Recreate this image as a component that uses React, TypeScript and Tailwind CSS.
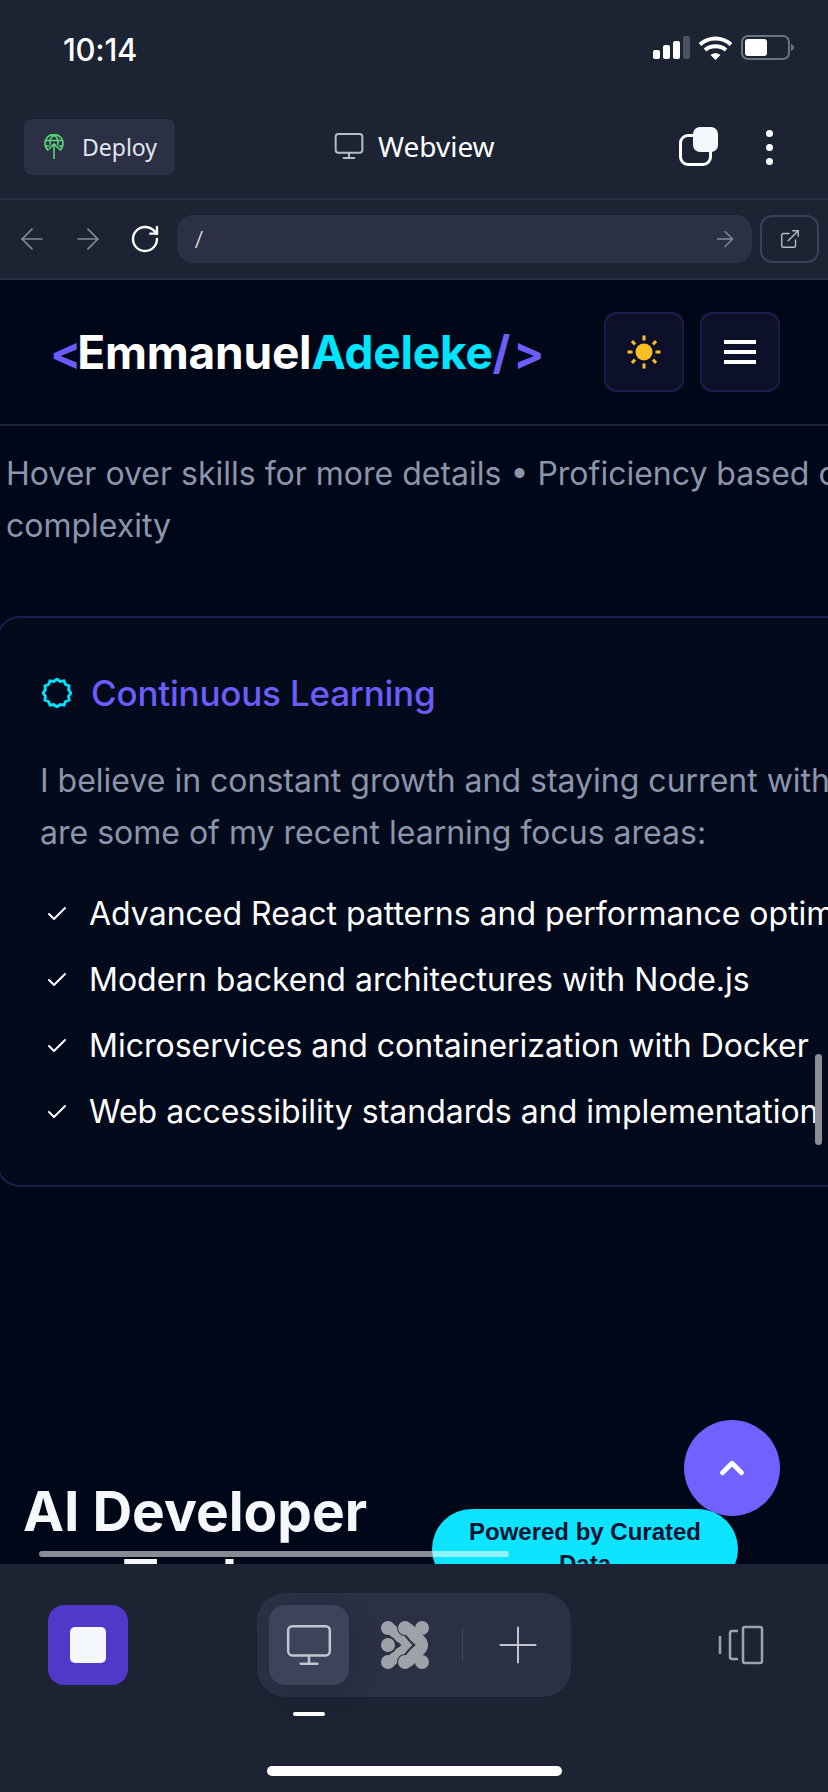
import { ArrowLeft, ArrowRight, Check, ChevronUp, ExternalLink, Monitor, Plus, RotateCw } from "lucide-react";

const learning = [
  "Advanced React patterns and performance optimization",
  "Modern backend architectures with Node.js",
  "Microservices and containerization with Docker",
  "Web accessibility standards and implementation",
];

// scalloped ring next to the "Continuous Learning" heading
function spikyRing() {
  const pts: string[] = [];
  for (let i = 0; i < 24; i++) {
    const r = i % 2 === 0 ? 14 : 12;
    const a = (i / 24) * Math.PI * 2;
    pts.push(`${(15 + Math.sin(a) * r).toFixed(2)},${(15 - Math.cos(a) * r).toFixed(2)}`);
  }
  return pts.join(" ");
}

function StatusBar() {
  return (
    <div className="flex h-[100px] items-center justify-between pl-[63px] pr-[33px]">
      <span className="font-['Inter',sans-serif] text-[31px] font-medium tracking-[-0.3px] text-white">10:14</span>
      <svg width="142" height="30" viewBox="0 0 142 30" fill="none">
        <rect x="0" y="15" width="7" height="9" rx="2" fill="#fff" />
        <rect x="10" y="10" width="7" height="14" rx="2" fill="#fff" />
        <rect x="20" y="6" width="7" height="18" rx="2" fill="#fff" />
        <rect x="30" y="1" width="7" height="23" rx="2" fill="#4b5262" />
        <path d="M47 9.500c9-8 22-8 31 0" stroke="#fff" strokeWidth="4" />
        <path d="M52 15c6-5 15-5 21 0" stroke="#fff" strokeWidth="4" />
        <path d="M57.500 20c3-2.500 7-2.500 10 0L62.500 25z" fill="#fff" />
        <rect x="89" y="1" width="47" height="23" rx="6" stroke="#6d7380" strokeWidth="2" />
        <rect x="92" y="4" width="22" height="17" rx="3" fill="#fff" />
        <path d="M138 9c2 1 3 2 3 3.500s-1 2.500-3 3.500z" fill="#6d7380" />
      </svg>
    </div>
  );
}

function ToolBar() {
  return (
    <div className="flex h-[100px] items-start border-b-2 border-[#2b3045] pl-6 pt-[19px]">
      <button className="flex h-14 w-[151px] items-center gap-[18px] rounded-lg bg-[#2b3045] pl-[20px]">
        <svg width="20" height="26" viewBox="0 0 20 26" fill="none" stroke="#5bd97a" strokeWidth="1.600">
          <path d="M4.500 16.500A9 9 0 1 1 15.500 16.500" />
          <path d="M1.500 6.500h17M1.500 12h4M14.500 12h4M6.500 11C5 7 6.500 3 10 1.500c3.500 1.500 5 5.500 3.500 9.500" />
          <path d="M10 25V10M5 15l5-5 5 5" />
        </svg>
        <span className="font-['Noto_Sans',sans-serif] text-[23px] text-[#e3e6ee]">Deploy</span>
      </button>
      <div className="ml-[158px] mt-[6px] flex items-center gap-[13px]">
        <Monitor size={32} strokeWidth={1.500} className="text-[#b8bcc6]" />
        <span className="font-['Noto_Sans',sans-serif] text-[28px] text-white">Webview</span>
      </div>
      <div className="relative ml-[184px] mt-[8px] h-[39px] w-[39px]">
        <div className="absolute bottom-0 left-0 h-[32px] w-[33px] rounded-[9px] border-[3px] border-white" />
        <div className="absolute right-0 top-0 h-[25px] w-[25px] rounded-[7px] bg-[#f4f7fb]" />
      </div>
      <div className="ml-[48px] mt-[11px] flex flex-col gap-[7px]">
        <span className="h-[7px] w-[7px] rounded-full bg-white" />
        <span className="h-[7px] w-[7px] rounded-full bg-white" />
        <span className="h-[7px] w-[7px] rounded-full bg-white" />
      </div>
    </div>
  );
}

function UrlBar() {
  return (
    <div className="flex h-[80px] items-center border-b-2 border-[#2b3045] pl-[15px] pr-[9px]">
      <ArrowLeft size={34} strokeWidth={1.200} className="text-[#858a96]" />
      <ArrowRight size={34} strokeWidth={1.200} className="ml-[22px] text-[#858a96]" />
      <RotateCw size={32} strokeWidth={1.800} className="ml-[24px] text-white" />
      <div className="ml-[16px] flex h-12 w-[576px] items-center justify-between rounded-2xl bg-[#2b3045] pl-[18px] pr-[14px]">
        <span className="font-['Noto_Sans',sans-serif] text-[24px] font-light text-[#e3e6ee]">/</span>
        <ArrowRight size={26} strokeWidth={1.200} className="text-[#858a96]" />
      </div>
      <div className="ml-2 flex h-12 w-[59px] items-center justify-center rounded-xl border-2 border-[#3a4055]">
        <ExternalLink size={22} strokeWidth={1.500} className="text-[#b8bcc6]" />
      </div>
    </div>
  );
}

function SiteHeader() {
  return (
    <div className="flex h-[146px] items-center border-b-2 border-[#1e2536] pl-[50px] pr-[48px]">
      <div className="font-['Inter',sans-serif] text-[46px] font-bold leading-none tracking-[-0.2px] whitespace-nowrap">
        <span className="tracking-[-4px] text-[#6c5dfb]">&lt;</span>
        <span className="text-white">Emmanuel</span>
        <span className="text-[#00e5ff]">Adeleke</span>
        <span className="text-[#6c5dfb]">/</span>
        <span className="ml-[3px] text-[#6c5dfb]">&gt;</span>
      </div>
      <div className="ml-auto flex gap-4">
        <button className="flex h-20 w-20 items-center justify-center rounded-xl border-2 border-[#1e1b4b] bg-[#0d1029]">
          <svg width="34" height="34" viewBox="0 0 34 34" fill="#fbbf24">
            <circle cx="17" cy="17" r="8.500" />
            <rect x="15.500" y="0.500" width="3" height="5" />
            <rect x="15.500" y="28.500" width="3" height="5" />
            <rect x="0.500" y="15.500" width="5" height="3" />
            <rect x="28.500" y="15.500" width="5" height="3" />
            <rect x="5" y="5.500" width="3" height="4.500" transform="rotate(-45 6.500 7.750)" />
            <rect x="26" y="5.500" width="3" height="4.500" transform="rotate(45 27.500 7.750)" />
            <rect x="5" y="24" width="3" height="4.500" transform="rotate(45 6.500 26.250)" />
            <rect x="26" y="24" width="3" height="4.500" transform="rotate(-45 27.500 26.250)" />
          </svg>
        </button>
        <button className="flex h-20 w-20 flex-col items-center justify-center gap-[6px] rounded-xl border-2 border-[#1e1b4b] bg-[#0d1029]">
          <span className="h-1 w-8 bg-white" />
          <span className="h-1 w-8 bg-white" />
          <span className="h-1 w-8 bg-white" />
        </button>
      </div>
    </div>
  );
}

function LearningCard() {
  return (
    <div className="-ml-[4px] mt-[64px] w-[1100px] rounded-3xl border-2 border-[#1e1b4b] bg-[#030a1c] pb-[49px] pl-[42px] pt-[49px]">
      <div className="flex items-center gap-[19px] pl-[2px]">
        <svg width="30" height="30" viewBox="0 0 30 30" fill="none" stroke="#00e5ff" strokeWidth="2.800">
          <polygon points={spikyRing()} />
        </svg>
        <h3 className="text-[35px] font-medium leading-[52px] tracking-[-0.2px] text-[#6c5dfb]">Continuous Learning</h3>
      </div>
      <p className="mt-[36px] whitespace-nowrap text-[32px] leading-[52px] text-[#8b95ab]">
        I believe in constant growth and staying current with new technologies. Here
        <br />
        are some of my recent learning focus areas:
      </p>
      <ul className="mt-[31px] flex flex-col gap-[18px]">
        {learning.map((item) => (
          <li key={item} className="flex h-12 items-center gap-[20px] whitespace-nowrap text-[32px] text-white">
            <Check size={24} strokeWidth={2} className="ml-[5px] text-white" />
            {item}
          </li>
        ))}
      </ul>
    </div>
  );
}

function WebContent() {
  return (
    <div className="relative min-h-0 flex-1 overflow-hidden bg-[#000718] font-['Inter',sans-serif]">
      <SiteHeader />
      <p className="ml-[6px] mt-[22px] whitespace-nowrap text-[32px] leading-[52px] text-[#8b95ab]">
        Hover over skills for more details • Proficiency based on project
        <br />
        complexity
      </p>
      <LearningCard />
      <h2 className="mt-[290px] w-[390px] text-center text-[55px] font-bold leading-[68px] text-[#f5f7fb]">
        AI Developer Tools
      </h2>

      <div className="absolute right-[6px] top-[774px] h-[91px] w-[7px] rounded-full bg-[#8a8d96]" />
      <div className="absolute left-[432px] top-[1229px] h-[80px] w-[306px] rounded-[40px] bg-[#0de4ff] px-6 pt-[7px] text-center font-['Liberation_Sans',sans-serif] text-[24px] font-bold leading-[32px] text-[#0a1330]">
        Powered by Curated Data
      </div>
      <div className="absolute left-[684px] top-[1140px] flex h-24 w-24 items-center justify-center rounded-full bg-[#7161ff]">
        <ChevronUp size={38} strokeWidth={3} className="text-white" />
      </div>
      <div className="absolute left-[39px] top-[1271px] h-[6px] w-[470px] rounded-full bg-[#ffffff88]" />
    </div>
  );
}

function BottomBar() {
  return (
    <div className="relative h-[228px] bg-[#1c2333]">
      <div className="flex h-[133px] items-center pl-[48px] pr-[64px] pt-[29px]">
        <button className="flex h-20 w-20 items-center justify-center rounded-2xl bg-[#5138c9]">
          <span className="h-[36px] w-[36px] rounded-[5px] bg-[#f4f7fb]" />
        </button>
        <div className="ml-[129px] flex h-[104px] w-[314px] items-center rounded-[28px] bg-[#2b3045] pl-3">
          <div className="flex h-20 w-20 items-center justify-center rounded-2xl bg-[#3c445c] shadow-[8px_8px_24px_rgba(0,0,0,0.12)]">
            <Monitor size={50} strokeWidth={1.200} className="text-[#c3c6ce]" />
          </div>
          <svg className="ml-[32px]" width="48" height="48" viewBox="0 0 48 48" fill="#9fa3a9">
            <circle cx="7" cy="7" r="7" />
            <circle cx="7" cy="41" r="7" />
            <path d="M7 7C12 7 13 13 19 16C24 19 26 22 26 24C26 26 24 29 19 32C13 35 12 41 7 41" stroke="#9fa3a9" strokeWidth="11" strokeLinecap="round" fill="none" />
            <path d="M24 7C30 7 31 14 37 18C40 20 41 22 41 24C41 26 40 28 37 30C31 34 30 41 24 41" stroke="#2b3045" strokeWidth="16" strokeLinecap="round" fill="none" />
            <path d="M24 7C30 7 31 14 37 18C40 20 41 22 41 24C41 26 40 28 37 30C31 34 30 41 24 41" stroke="#9fa3a9" strokeWidth="12" strokeLinecap="round" fill="none" />
            <circle cx="24" cy="7" r="7" />
            <circle cx="24" cy="41" r="7" />
            <circle cx="7" cy="24" r="9" fill="#2b3045" />
            <circle cx="7" cy="24" r="7" />
            <circle cx="41" cy="7" r="7" />
            <circle cx="41" cy="41" r="7" />
          </svg>
          <span className="ml-[33px] h-8 w-px bg-[#444b60]" />
          <Plus size={60} strokeWidth={0.800} className="ml-[25px] text-[#c3c6ce]" />
        </div>
        <svg className="ml-auto" width="46" height="40" viewBox="0 0 46 40" fill="none" stroke="#9fa3a9" strokeWidth="2.500">
          <rect x="25" y="2" width="19" height="36" rx="2" />
          <path d="M20 6h-6a2 2 0 0 0-2 2v24a2 2 0 0 0 2 2h6M2 11v18" />
        </svg>
      </div>
      <div className="ml-[293px] mt-[15px] h-1 w-8 rounded-full bg-white" />
      <div className="ml-[267px] mt-[50px] h-[10px] w-[295px] rounded-full bg-white" />
    </div>
  );
}

export default function App() {
  return (
    <div className="flex h-[1792px] w-[828px] flex-col overflow-hidden bg-[#1c2333]">
      <StatusBar />
      <ToolBar />
      <UrlBar />
      <WebContent />
      <BottomBar />
    </div>
  );
}
